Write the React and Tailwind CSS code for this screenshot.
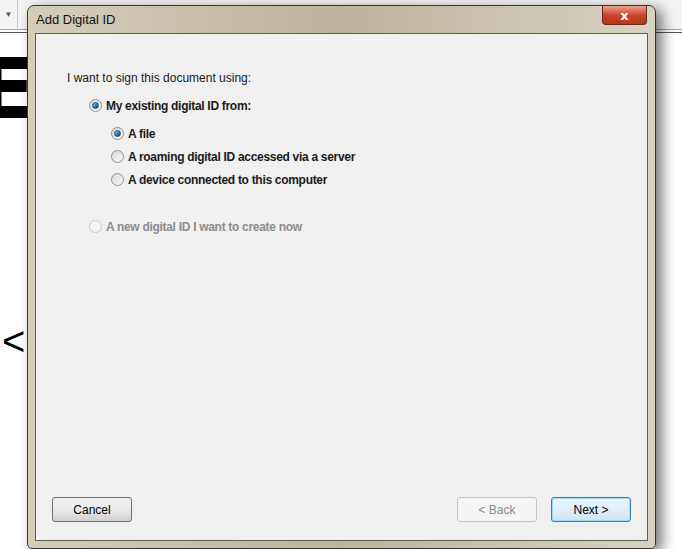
import React from "react";

const font = { fontFamily: '"Segoe UI", "Liberation Sans", Arial, sans-serif' };

function Radio({ checked, disabled }) {
  return (
    <span
      className={`relative inline-flex h-[13px] w-[13px] shrink-0 items-center justify-center rounded-full border ${
        disabled
          ? "border-[#c9c9c9] bg-[#f4f4f4]"
          : "border-[#8e8f8f] bg-gradient-to-br from-[#d8d8d8] to-[#fbfbfb]"
      }`}
    >
      {checked && (
        <span className="h-[7px] w-[7px] rounded-full border border-[#1d4e72] bg-gradient-to-br from-[#8fd2f0] via-[#2a86bb] to-[#0f4b73]" />
      )}
    </span>
  );
}

function Option({ label, checked, disabled }) {
  return (
    <label className="flex h-[23px] items-center gap-[4px]">
      <Radio checked={checked} disabled={disabled} />
      <span
        className={`text-[12px] font-bold tracking-[-0.3px] ${
          disabled ? "text-[#8d8d8d]" : "text-[#1a1a1a]"
        }`}
      >
        {label}
      </span>
    </label>
  );
}

function Btn({ children, disabled, focused }) {
  return (
    <button
      className={`h-[25px] w-[80px] rounded-[3px] border text-[12px] ${
        disabled
          ? "border-[#c4c4c4] bg-[#f4f4f4] text-[#8a8a8a]"
          : focused
          ? "border-[#3c7fb1] bg-gradient-to-b from-[#eaf6fd] via-[#dfeffa] to-[#cfe3f1] text-black shadow-[inset_0_0_0_1px_#9ed9f6]"
          : "border-[#707070] bg-gradient-to-b from-[#f2f2f2] via-[#ebebeb] to-[#cfcfcf] text-black"
      }`}
    >
      {children}
    </button>
  );
}

export default function App() {
  return (
    <div className="relative h-[549px] w-[682px] overflow-hidden bg-white" style={font}>
      {/* background application */}
      <div className="flex h-[30px] items-center border-b border-[#a0a0a0] bg-[#f3f3f3]">
        <div className="flex h-[30px] w-[18px] items-center justify-center border-r border-[#c8c8c8] text-[8px] text-[#555]">
          ▼
        </div>
      </div>
      <div className="h-[3px] border-b border-[#555] bg-white" />
      <div className="mt-[24px] text-[84px] font-black leading-[64px] text-black" style={{ fontFamily: '"DejaVu Sans", sans-serif' }}>
        <span className="-ml-[22px] inline-block">E</span>
      </div>
      <div className="mt-[200px] pl-[2px] text-[40px] font-light leading-none text-black">&lt;</div>

      {/* dialog window */}
      <div className="absolute left-[27px] top-[5px] flex h-[544px] w-[629px] flex-col rounded-t-[7px] rounded-b-[5px] border border-[#37352f] bg-gradient-to-r from-[#d4cdb9] via-[#bdb49b] to-[#d8d2c2] shadow-[6px_4px_14px_rgba(0,0,0,0.55)]">
        <div className="relative flex h-[27px] items-center pl-[8px]">
          <span className="text-[13px] text-[#111]">Add Digital ID</span>
          <div className="absolute right-[8px] top-0 flex h-[19px] w-[45px] items-center justify-center rounded-b-[4px] border border-t-0 border-[#6c2a1e] bg-gradient-to-b from-[#e9a08d] via-[#c9452c] to-[#b8361d]">
            <span className="text-[13px] font-bold leading-none text-white" style={{ fontFamily: '"DejaVu Sans", sans-serif' }}>
              x
            </span>
          </div>
        </div>
        <div className="mx-[7px] mb-[7px] flex flex-1 flex-col border border-[#5e5b52] bg-[#f0f0f0]">
          <div className="flex flex-1 flex-col pl-[31px] pt-[35px]">
            <div className="text-[12px] text-[#1a1a1a]">I want to sign this document using:</div>
            <div className="mt-[7px] pl-[22px]">
              <Option label="My existing digital ID from:" checked />
              <div className="mt-[5px] pl-[22px]">
                <Option label="A file" checked />
                <Option label="A roaming digital ID accessed via a server" />
                <Option label="A device connected to this computer" />
              </div>
              <div className="mt-[24px]">
                <Option label="A new digital ID I want to create now" disabled />
              </div>
            </div>
          </div>
          <div className="flex items-center px-[16px] pb-[18px]">
            <Btn>Cancel</Btn>
            <div className="flex-1" />
            <Btn disabled>&lt; Back</Btn>
            <div className="w-[14px]" />
            <Btn focused>Next &gt;</Btn>
          </div>
        </div>
      </div>
    </div>
  );
}
